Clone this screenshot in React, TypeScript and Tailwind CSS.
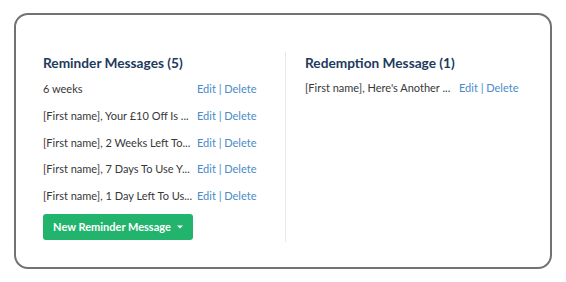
import React from "react";

const reminders = [
  "6 weeks",
  "[First name], Your £10 Off Is ...",
  "[First name], 2 Weeks Left To...",
  "[First name], 7 Days To Use Y...",
  "[First name], 1 Day Left To Us...",
];

function Row({ text }: { text: string }) {
  return (
    <div className="flex items-center h-[26.75px] text-[11px]">
      <div className="w-[154px] whitespace-nowrap text-[#383838]">{text}</div>
      <div className="whitespace-nowrap text-[#4a8bc9]">Edit | Delete</div>
    </div>
  );
}

export default function App() {
  return (
    <div className="w-[566px] h-[282px] bg-white pt-[13px] pl-[14px]" style={{ fontFamily: '"Lato", "Open Sans", sans-serif' }}>
      <div className="w-[538px] h-[256px] border-2 border-[#727272] rounded-[14px] pt-[37px] pl-[27px]">
        <div className="flex">
          <div className="w-[242px] h-[190px] flex flex-col">
            <div className="h-[22px] leading-[22px] text-[13.7px] font-bold text-[#1d3b5c] mb-[2px]">Reminder Messages (5)</div>
            {reminders.map((r, i) => (
              <Row key={i} text={r} />
            ))}
            <button className="mt-[4px] w-[150px] h-[26px] rounded-[3px] bg-[#22b36d] text-white text-[11px] font-bold flex items-center justify-center gap-[6px]">
              <span>New Reminder Message</span>
              <svg width="6" height="4" viewBox="0 0 6 4"><path d="M0 0.5 L6 0.5 L3 3.5 Z" fill="white" /></svg>
            </button>
          </div>
          <div className="w-px h-[190px] bg-[#e4e9ef]" />
          <div className="pl-[19px] flex flex-col">
            <div className="h-[22px] leading-[22px] text-[13.7px] font-bold text-[#1d3b5c] mb-[1px]">Redemption Message (1)</div>
            <Row text="[First name], Here's Another ..." />
          </div>
        </div>
      </div>
    </div>
  );
}
